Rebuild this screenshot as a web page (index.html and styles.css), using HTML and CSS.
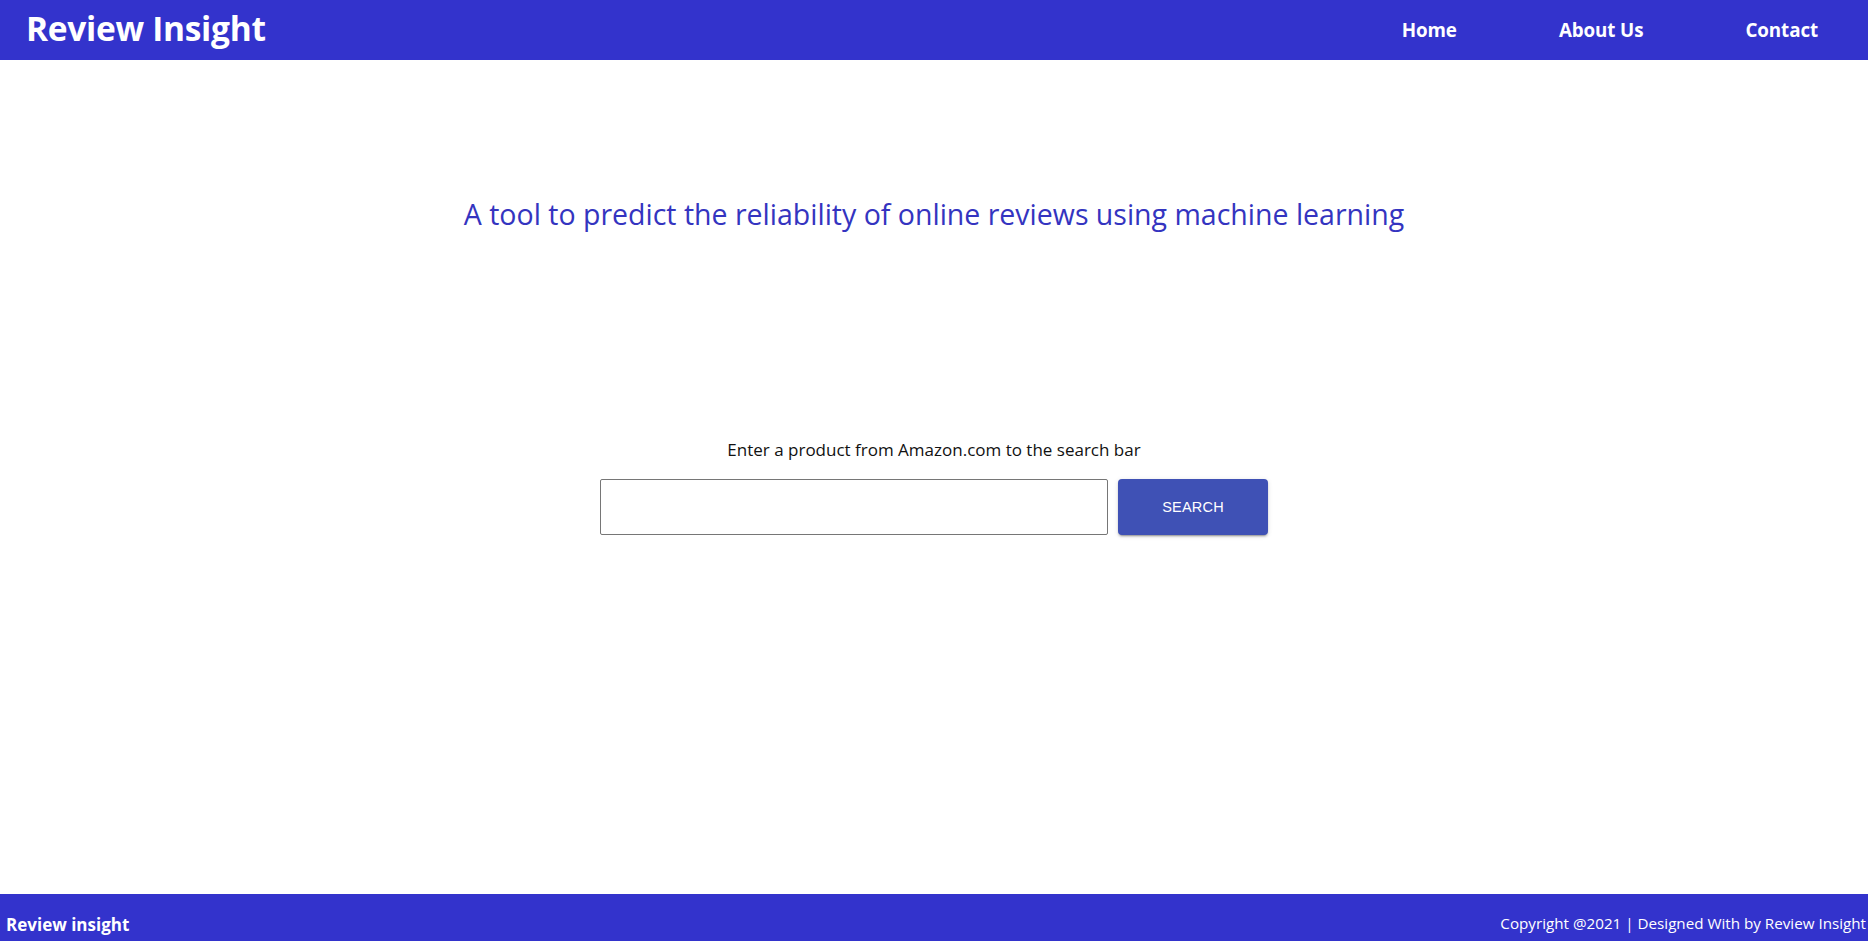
FILE: index.html
```html
<!DOCTYPE html>
<html lang="en">
<head>
<meta charset="utf-8">
<title>Review Insight</title>
<link rel="stylesheet" href="styles.css">
</head>
<body>
<div class="page">
  <header class="topbar">
    <div class="brand">Review Insight</div>
    <nav class="nav">
      <a class="nav-link" href="#">Home</a>
      <a class="nav-link" href="#">About Us</a>
      <a class="nav-link" href="#">Contact</a>
    </nav>
  </header>
  <main class="main">
    <h2 class="tagline">A tool to predict the reliability of online reviews using machine learning</h2>
    <section class="search">
      <p class="search-hint">Enter a product from Amazon.com to the search bar</p>
      <form class="search-row">
        <input class="search-input" type="text">
        <button class="search-btn" type="button">Search</button>
      </form>
    </section>
  </main>
  <footer class="footer">
    <div class="footer-brand">Review insight</div>
    <div class="footer-copy">Copyright @2021 | Designed With by Review Insight</div>
  </footer>
</div>
</body>
</html>
```
FILE: styles.css
```css
* { box-sizing: border-box; }
html, body { margin: 0; padding: 0; }
body {
  font-family: "Open Sans", "Noto Sans", sans-serif;
  background: #ffffff;
  color: #000;
}
.page {
  height: 941px;
  display: flex;
  flex-direction: column;
  overflow: hidden;
}
.topbar {
  height: 60px;
  flex: 0 0 60px;
  background: #3333cc;
  display: flex;
  align-items: center;
  justify-content: space-between;
  padding: 0 50px 0 26px;
}
.brand {
  color: #fff;
  font-weight: 700;
  font-size: 33.5px;
  letter-spacing: -0.3px;
  line-height: 1;
  padding-bottom: 3px;
}
.nav {
  display: flex;
  gap: 102px;
}
.nav-link {
  color: #fff;
  text-decoration: none;
  font-weight: 700;
  font-size: 18.8px;
  letter-spacing: -0.1px;
}
.main {
  flex: 1 1 auto;
  display: flex;
  flex-direction: column;
  align-items: center;
}
.tagline {
  margin: 137px 0 0;
  font-weight: 400;
  font-size: 28.5px;
  color: #3434c0;
  line-height: 34px;
}
.search {
  margin-top: 207px;
  display: flex;
  flex-direction: column;
  align-items: center;
}
.search-hint {
  margin: 0 0 18px;
  font-size: 17px;
  line-height: 23px;
  color: #111;
}
.search-row {
  display: flex;
  gap: 10px;
  margin: 0;
}
.search-input {
  width: 508px;
  height: 56px;
  border: 1px solid #767676;
  border-radius: 2px;
  padding: 0 8px;
  font-size: 16px;
}
.search-btn {
  width: 150px;
  height: 56px;
  border: none;
  border-radius: 4px;
  background: #3f51b5;
  color: #fff;
  font-family: "Liberation Sans", Arial, sans-serif;
  font-size: 14.5px;
  font-weight: 400;
  letter-spacing: 0.2px;
  text-transform: uppercase;
  box-shadow: 0 3px 1px -2px rgba(0,0,0,0.2), 0 2px 2px 0 rgba(0,0,0,0.14), 0 1px 5px 0 rgba(0,0,0,0.12);
}
.footer {
  flex: 0 0 47px;
  background: #3333cc;
  color: #fff;
  display: flex;
  justify-content: space-between;
  align-items: flex-start;
  padding: 19px 2px 0 6px;
}
.footer-brand {
  font-weight: 700;
  font-size: 17px;
}
.footer-copy {
  font-size: 15.2px;
}
```
